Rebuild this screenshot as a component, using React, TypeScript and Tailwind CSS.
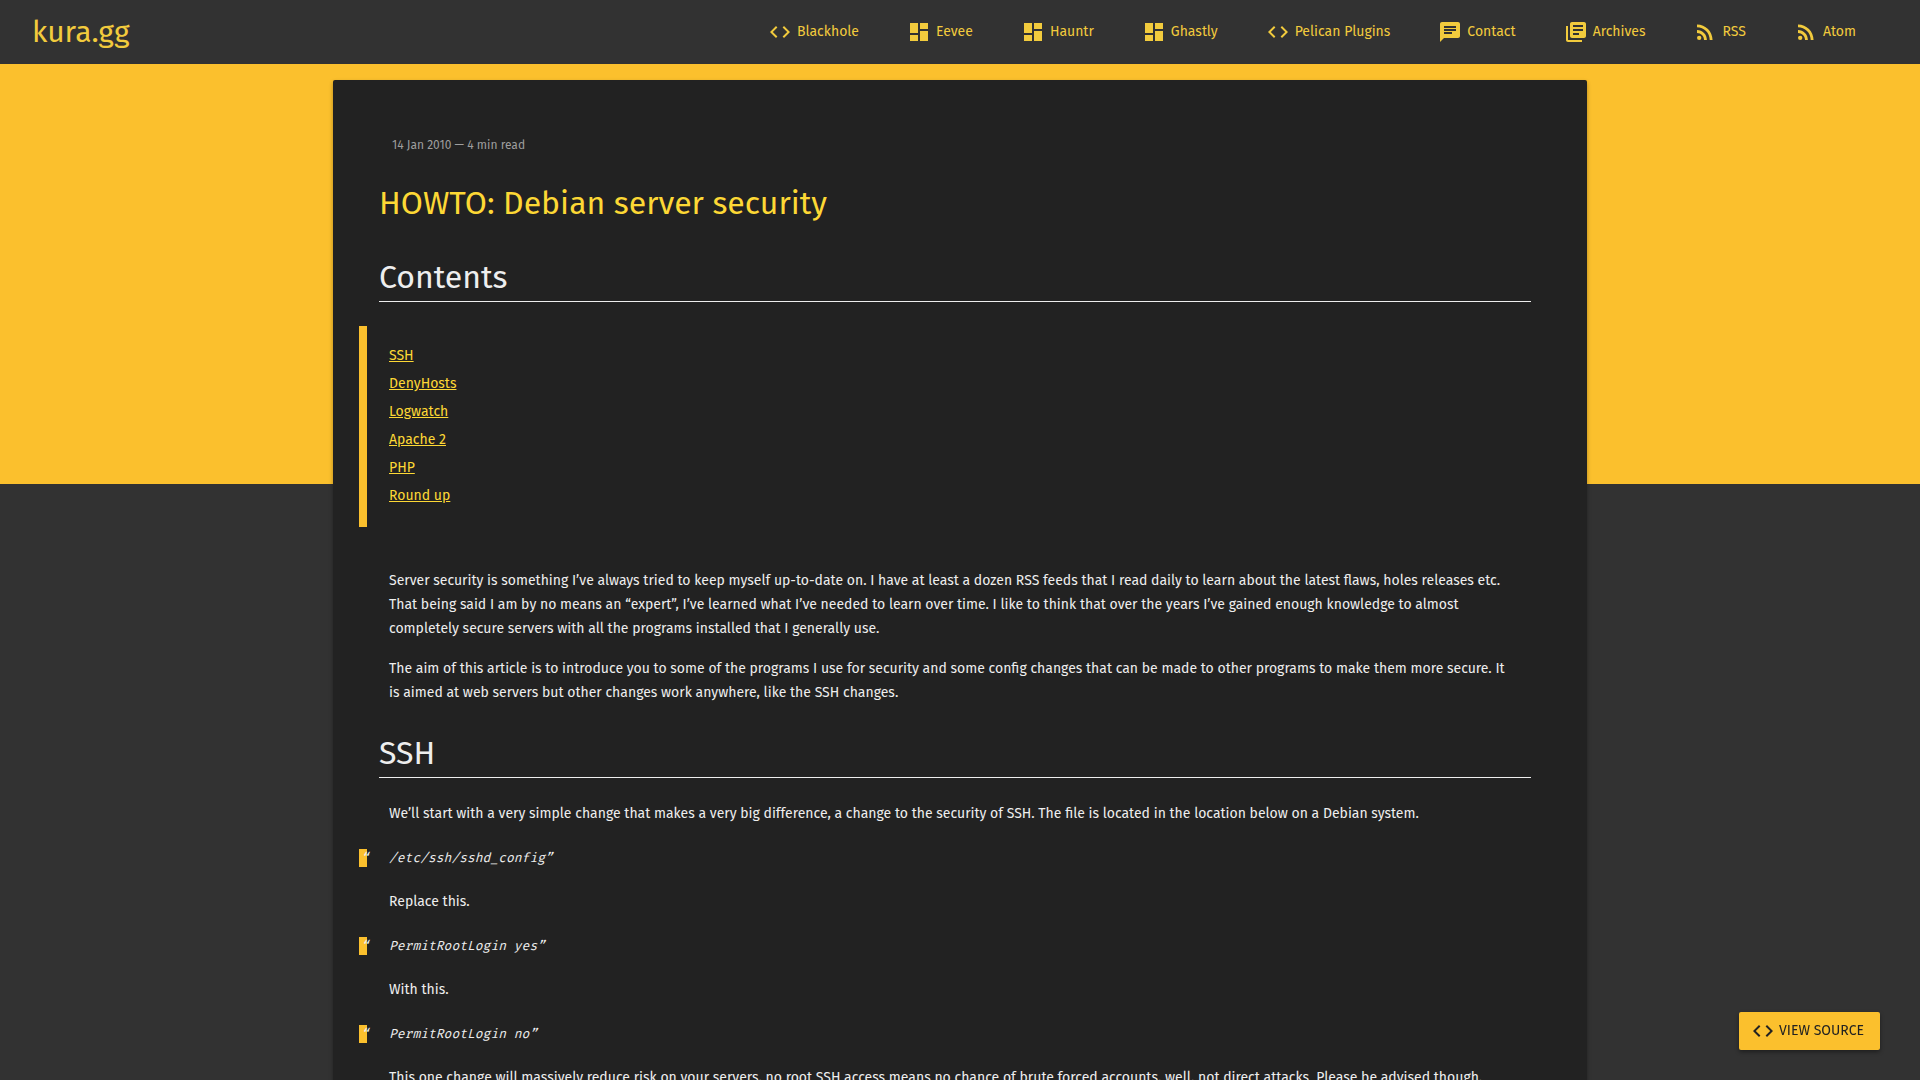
import type { ReactNode } from "react";
import type { IconType } from "react-icons";
import { MdChat, MdCode, MdDashboard, MdLibraryBooks, MdRssFeed } from "react-icons/md";

const navItems: { label: string; icon: IconType }[] = [
  { label: "Blackhole", icon: MdCode },
  { label: "Eevee", icon: MdDashboard },
  { label: "Hauntr", icon: MdDashboard },
  { label: "Ghastly", icon: MdDashboard },
  { label: "Pelican Plugins", icon: MdCode },
  { label: "Contact", icon: MdChat },
  { label: "Archives", icon: MdLibraryBooks },
  { label: "RSS", icon: MdRssFeed },
  { label: "Atom", icon: MdRssFeed },
];

const contents = [
  { label: "SSH", id: "ssh" },
  { label: "DenyHosts", id: "denyhosts" },
  { label: "Logwatch", id: "logwatch" },
  { label: "Apache 2", id: "apache-2" },
  { label: "PHP", id: "php" },
  { label: "Round up", id: "round-up" },
];

function Header() {
  return (
    <header className="flex h-16 shrink-0 items-center justify-between bg-[#323232] pr-10 pl-8 text-[#f2cb3d]">
      <a href="#top" className="text-[30px] leading-9">
        kura.gg
      </a>
      <nav className="flex items-center">
        {navItems.map(({ label, icon: Icon }) => (
          <a key={label} href={`#${label}`} className="flex items-center gap-[5px] px-6 text-sm whitespace-nowrap">
            <Icon className="size-6" aria-hidden="true" />
            {label}
          </a>
        ))}
      </nav>
    </header>
  );
}

function Heading({ id, children }: { id: string; children: ReactNode }) {
  return (
    <h2 id={id} className="-ml-[10px] border-b border-[#eeeeee] pb-1 text-[32px] leading-10">
      {children}
    </h2>
  );
}

function Quote({ children }: { children: ReactNode }) {
  return (
    <blockquote className="relative my-[23px] -ml-[30px] border-l-8 border-[#fbc02d] pl-[22px] font-['Fira_Mono','Liberation_Mono',monospace] text-[13px] leading-[18px] italic">
      <span className="absolute -left-[6px]">“</span>
      {children}”
    </blockquote>
  );
}

export default function App() {
  return (
    <div
      id="top"
      className="flex h-screen flex-col overflow-hidden bg-[#323232] font-['Fira_Sans','Open_Sans',sans-serif] text-sm text-[#eeeeee]"
    >
      <Header />
      <div className="h-[420px] shrink-0 bg-[#fbc02d]" />
      <main className="mx-auto -mt-[404px] w-full max-w-[1254px] shrink-0 rounded-xs bg-[#222222] px-14 pt-[53px] pb-20 leading-6 shadow-[0_2px_4px_rgba(0,0,0,0.3)]">
        <p className="ml-[3px] text-xs leading-6 text-[#9e9e9e]">14 Jan 2010 — 4 min read</p>
        <h1 className="mt-[26px] -ml-[10px] text-[32px] leading-10 text-[#fdd835]">HOWTO: Debian server security</h1>

        <div className="mt-[34px]">
          <Heading id="contents">Contents</Heading>
        </div>
        <ul className="mt-6 -ml-[30px] border-l-8 border-[#fbc02d] pt-4 pb-[17px] pl-[22px] leading-7">
          {contents.map(({ label, id }) => (
            <li key={id}>
              <a href={`#${id}`} className="text-[#fdd835] underline">
                {label}
              </a>
            </li>
          ))}
        </ul>

        <div className="mt-[42px] space-y-4">
          <p>
            Server security is something I’ve always tried to keep myself up-to-date on. I have at least a dozen RSS
            feeds that I read daily to learn about the latest flaws, holes releases etc.
            <br />
            That being said I am by no means an “expert”, I’ve learned what I’ve needed to learn over time. I like to
            think that over the years I’ve gained enough knowledge to almost
            <br />
            completely secure servers with all the programs installed that I generally use.
          </p>
          <p>
            The aim of this article is to introduce you to some of the programs I use for security and some config
            changes that can be made to other programs to make them more secure. It
            <br />
            is aimed at web servers but other changes work anywhere, like the SSH changes.
          </p>
        </div>

        <div className="mt-7">
          <Heading id="ssh">SSH</Heading>
        </div>
        <p className="mt-6">
          We’ll start with a very simple change that makes a very big difference, a change to the security of SSH. The
          file is located in the location below on a Debian system.
        </p>
        <Quote>/etc/ssh/sshd_config</Quote>
        <p>Replace this.</p>
        <Quote>PermitRootLogin yes</Quote>
        <p>With this.</p>
        <Quote>PermitRootLogin no</Quote>
        <p>
          This one change will massively reduce risk on your servers, no root SSH access means no chance of brute forced
          accounts, well, not direct attacks. Please be advised though,
        </p>
      </main>
      <a
        href="#source"
        className="fixed right-10 bottom-[30px] flex h-[38px] items-center gap-1 rounded-xs bg-[#fbc02d] pr-4 pl-3 text-sm text-[#222222] shadow-[0_2px_4px_rgba(0,0,0,0.4)]"
      >
        <MdCode className="size-6" aria-hidden="true" />
        VIEW SOURCE
      </a>
    </div>
  );
}
